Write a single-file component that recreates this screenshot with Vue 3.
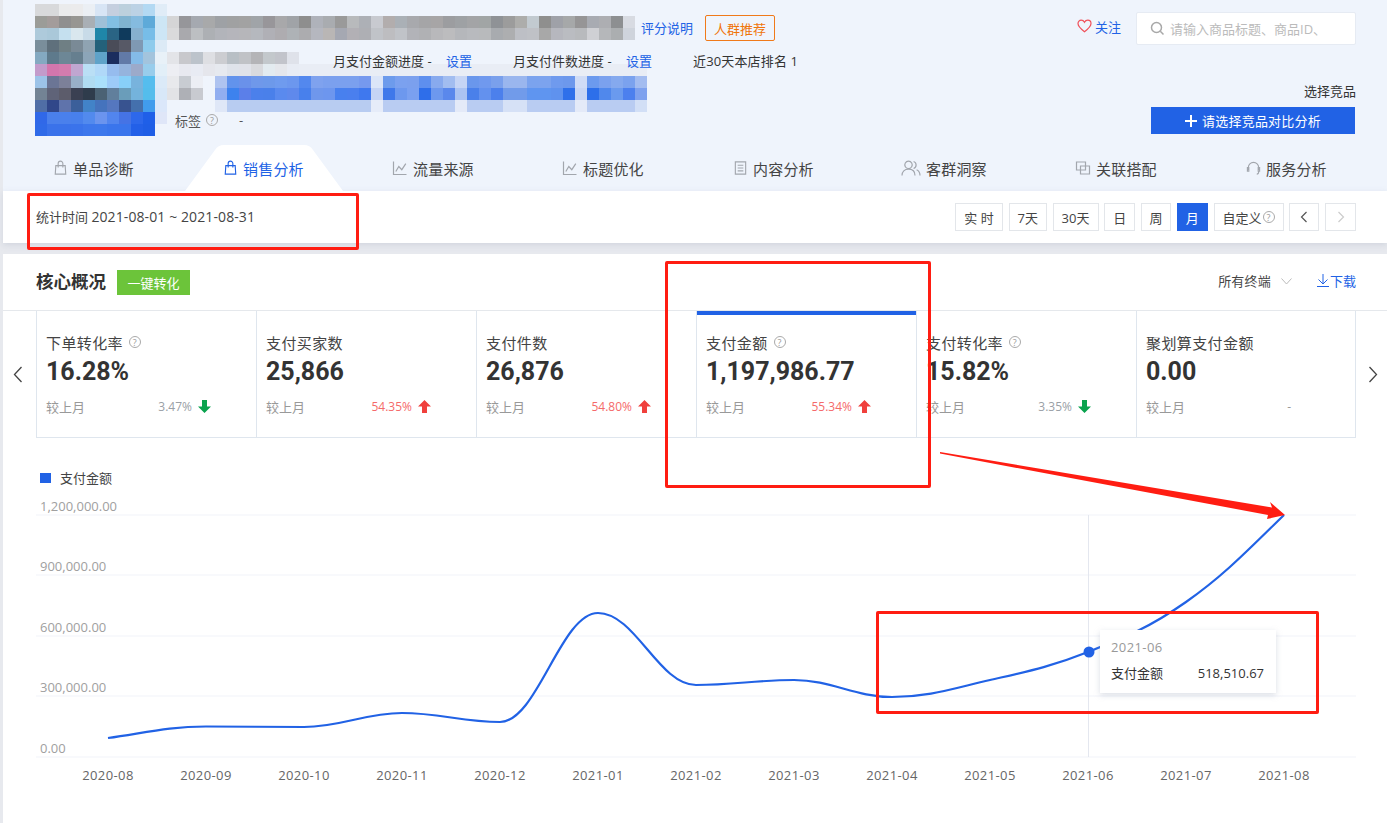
<script setup>
const toCells = (s) => s.trim().split(/\s+/).map((c) => (c === '-' ? 'transparent' : c))

const imageRows = `
#d8d9db #d8d9db #eaebec #ebebec #ebeff4 #d8e5f5 #c5cfdf #bcd0dd #bcd2e5 #b3d9f3 #e0ecf7
#9b9c98 #a39c9b #8f8f8f #979692 #a9afb5 #9fc0d8 #82bfe3 #80b3d0 #85bbdf #5eaad9 #cde6f5
#aecadb #aac8d9 #c5e0ef #d9e7ee #c8dbe8 #1f86a9 #2a6484 #0f3a5c #86b0cf #77bde8 #cde6f6
#7a8e9b #5f707c #6f7f84 #7a8a96 #8fa3b2 #24617a #4a4c58 #575966 #7f99b3 #8ecbec #dceaf6
#84a9c1 #5e7a8c #6d8796 #667f8f #8ca5b8 #5fa3c9 #1b2d5e #627aa7 #84bbe8 #a3c4dd #e8f1f8
#c39bcb #d376ad #d47cae #c0a6d0 #badff5 #b0d8f8 #96bcee #95b4dd #9caaca #98cdec #e2eff8
#9cc3e8 #6b7595 #7c8099 #98afc8 #b0dcf2 #abe0fb #9dcbf8 #88d0f8 #78b3dd #55bdee #dbeaf8
#738394 #5f6378 #5c5c6b #3a4052 #2f3c4c #4b6274 #617f9c #6a9dba #74b3dc #54bdec #d8e8f8
#506ea6 #31478a #5f73ab #3b5f9a #4283c8 #4573bd #5577bf #385390 #4470ad #419ced #dbe7fa
#3068e8 #4a80ec #4a80ec #4880ec #528aee #6b94ee #5285ee #4573e5 #2d68eb #1f5fe8 #dfe6f8
#2f6ae8 #3a72ea #3a72ea #3a73eb #3d77ec #3d78ec #3a75ec #3a75ec #2360e8 #1f5ee6 -
`.trim().split('\n').flatMap(toCells)

const titleRows = [
  `#d5d5d6 #96969a #a5a9b0 #a8a9aa #9ea1a5 #a0a1a2 #a2a2a2 #a0a4a8 #98969a #a8a8aa #a0a3a7 #8e8e8e #afb2ba #a9acb0 #9a9a9a #b8babc #adb0b6 #c8cad0 #b2adad #aab0b6
   #a8a9ad #a5a5a7 #a7a5a6 #9c9da0 #9ea1a4 #a3a4a6 #a1a5a5 #8f9296 #9c9c9c #adadab #c2cad0 #8f8f8e #9fa1a8 #a6a8a9 #969596 #a8abb2 #adaeb2 #8d8f91 #d8dbe2`,
  `#dadadb #a9a9ad #bcbfc2 #adb0b4 #b2b4ba #b5b5bb #b6b6ba #b5b8be #b0b0b6 #aeacb0 #aeb2b6 #acacaf #b5b7bf #b9b6b5 #a5a8b2 #b2b0b5 #aeafb4 #c0c3c8 #bdbdc0 #c0c3c8
   #b2b3b8 #b0b1b4 #b8b8bb #bcbcbe #b5b7bb #b8babe #b8babc #a8abaf #adaeb0 #bdbfc5 #bfc1c6 #a8a8a8 #b6b7be #babcc1 #b8babd #cfd0d4 #b5b7ba #abaeb0 #cfd4dc`
].flatMap(toCells)

const faint = Array(29).fill('#e9edf5').join(' ')
const shopRows = [
  `#e3e4e8 #c8c8cc #bcc3cb #dedfe3 #cccdd1 #b8bfc5 #c0c2c6 #b4b4b7 #c3c8cc #c2c4cb #dfe2ea ${Array(29).fill('-').join(' ')}`,
  `#edeef3 #e8e9f0 #e8ebf3 #e5e6ec #e6e9ef #dfe3ea #e0e2e9 #d9dade #e3ebf0 #e5e7ec #e8ecf4 ${faint}`
].flatMap(toCells)

const blueRows = [
  `#e8e9ec #c8ccd2 #eceef4 - #aec3f0 #6293ec #6a91ea #6f98ea #6d99ea #6f9bee #6c97ee #5388ee #7fa2ee #7ba0ee #7ba0ee #7ba0ee #7699ee #dbe5f8 #6d9bec #7ba1ef
   #7ba0ee #5e8fee #88aaee #a2bdf0 #c6d5f5 #6a97ec #7099ee #7aa0ec #9ab6ee #9ab6ee #7ba3ee #7ca3ee #6f9aee #6d98ec #d0dcf6 #6c9aee #7ba1ee #85a9ee #7ba2ee #a3bcf0`,
  `#e2e3e6 #aeb0b6 #c8cad0 - #91aef0 #3d82ee #5b7fe9 #4b80eb #4a80ea #5a8aee #5f89ec #4880ec #6f97ec #6d96ee #4880ee #4a7fee #3f78ee #c5d4f5 #3f78ea #6d98ee
   #7aa0f0 #2e6eea #6d98ee #5a88ec #abc3f2 #4a80ea #6391ee #4c80ec #719bea #719bea #5f95f0 #5f95f0 #5f92ee #2f70ea #c8d6f4 #2d6fea #5088ec #6a9aee #4c80ee #7ea1ee`,
  `- - - - #dfe7f7 ${Array(12).fill('#b8ccf1').join(' ')} #e6ecf9 ${Array(6).fill('#b9ccf2').join(' ')}
   #e4eaf8 #b9ccf2 #b9ccf2 #b9ccf2 #d6e1f6 #d6e1f6 #b9ccf2 #b9ccf2 #b9ccf2 #b9ccf2 #e4eaf8 #b9ccf2 #b9ccf2 #b9ccf2 #b9ccf2 #d2dff6`
].flatMap(toCells)

const bag = 'M3 5.5h10l.6 9H2.4zM5.5 7.5V3.2a2.5 2.5 0 0 1 5 0v4.3'
const trend = 'M1.5 1.5v13h13M3.8 11.5l3-5 3 3.2 4-6'
const tabs = [
  { name: '单品诊断', w: 15, paths: [bag] },
  { name: '销售分析', w: 15, paths: [bag], active: true },
  { name: '流量来源', w: 16, paths: [trend] },
  { name: '标题优化', w: 16, paths: [trend] },
  { name: '内容分析', w: 15, paths: ['M2.5 1.5h11v13h-11zM5 5h6M5 8h6M5 11h6'] },
  { name: '客群洞察', w: 20, vb: '0 0 20 16', paths: ['M7.5 1.2a3.7 3.7 0 1 0 .01 0zM1 15.5c0-4 2.6-6.3 6.5-6.3s6.5 2.3 6.5 6.3M12.6 1.5a3.7 3.7 0 0 1 0 7M15.6 9.8c2 .9 3.4 2.8 3.4 5.7'] },
  { name: '关联搭配', w: 16, paths: ['M1.5 2h9v8h-9zM5.5 6h9v8h-9z'] },
  { name: '服务分析', w: 15, paths: ['M2.5 10V7.5a5.5 5.5 0 0 1 11 0V10M1.5 7.5h1.5v4H1.5zM11.5 14.5c1.5 0 2-1 2-2.5M13 7.5h1.5v4H13z'] }
]

const ranges = ['实 时', '7天', '30天', '日', '周', '月']

const cards = [
  { label: '下单转化率', help: true, value: '16.28%', pct: '3.47%', dir: 'down' },
  { label: '支付买家数', value: '25,866', pct: '54.35%', dir: 'up' },
  { label: '支付件数', value: '26,876', pct: '54.80%', dir: 'up' },
  { label: '支付金额', help: true, value: '1,197,986.77', pct: '55.34%', dir: 'up', active: true },
  { label: '支付转化率', help: true, value: '15.82%', pct: '3.35%', dir: 'down' },
  { label: '聚划算支付金额', value: '0.00', pct: '-', dir: 'none' }
]

const gridLines = [
  { y: 515, label: '1,200,000.00' },
  { y: 575, label: '900,000.00' },
  { y: 636, label: '600,000.00' },
  { y: 696, label: '300,000.00' },
  { y: 757, label: '0.00' }
]

const pts = [
  [108, 738], [206, 726.5], [304, 727], [402, 713], [500, 722], [598, 613], [696, 685],
  [794, 680], [892, 697], [990, 680], [1088, 652], [1186, 602], [1284, 515]
]
const months = ['2020-08', '2020-09', '2020-10', '2020-11', '2020-12', '2021-01', '2021-02', '2021-03', '2021-04', '2021-05', '2021-06', '2021-07', '2021-08']

// Smooth curve with flat tangents at local extrema, as the original chart draws it
const slope = (i) => {
  if (i === 0) return ((pts[1][1] - pts[0][1]) / 98) * 1.2
  if (i === pts.length - 1) return ((pts[i][1] - pts[i - 1][1]) / 98) * 1.1
  const a = pts[i][1] - pts[i - 1][1]
  const b = pts[i + 1][1] - pts[i][1]
  if (a * b <= 0) return 0
  return (a + b) / 196
}
const linePath = pts.reduce((d, p, i) => {
  if (i === 0) return `M${p[0]} ${p[1]}`
  const q = pts[i - 1]
  const dx = (p[0] - q[0]) * 0.38
  return `${d}C${q[0] + dx} ${q[1] + slope(i - 1) * dx} ${p[0] - dx} ${p[1] - slope(i) * dx} ${p[0]} ${p[1]}`
}, '')
</script>

<template>
  <div class="page">
    <header class="hero">
      <div class="hero-top">
        <div class="mosaic image-mosaic">
          <i v-for="(c, i) in imageRows" :key="i" :style="{ background: c }"></i>
        </div>
        <div class="info">
          <div class="info-title">
            <div class="mosaic title-mosaic">
              <i v-for="(c, i) in titleRows" :key="i" :style="{ background: c }"></i>
            </div>
            <a class="link score">评分说明</a>
            <span class="crowd-tag">人群推荐</span>
          </div>
          <div class="info-shop">
            <div class="mosaic shop-mosaic">
              <i v-for="(c, i) in shopRows" :key="i" :style="{ background: c }"></i>
            </div>
            <div class="progress">
              <span class="prog-a">月支付金额进度 -</span>
              <a class="link prog-b">设置</a>
              <span class="prog-c">月支付件数进度 -</span>
              <a class="link prog-d">设置</a>
              <span class="prog-e">近30天本店排名 1</span>
            </div>
          </div>
          <div class="mosaic blue-mosaic">
            <i v-for="(c, i) in blueRows" :key="i" :style="{ background: c }"></i>
          </div>
          <div class="tags">
            <span>标签</span><span class="q">?</span><span class="tag-dash">-</span>
          </div>
        </div>
        <div class="actions">
          <div class="action-top">
            <div class="follow-wrap">
              <svg class="heart" width="15" height="14" viewBox="0 0 15 14">
                <path d="M7.5 12.8C3 9.4 1 7.2 1 4.6 1 2.6 2.5 1.2 4.2 1.2c1.4 0 2.6.8 3.3 2.1.7-1.3 1.9-2.1 3.3-2.1C12.5 1.2 14 2.6 14 4.6c0 2.6-2 4.8-6.5 8.2z" fill="none" stroke="#f0505a" stroke-width="1.2" />
              </svg>
              <a class="link follow">关注</a>
            </div>
            <div class="search">
              <svg width="15" height="15" viewBox="0 0 15 15">
                <circle cx="6.5" cy="6.5" r="5" fill="none" stroke="#a8a8a8" stroke-width="1.5" />
                <path d="M10.3 10.3 13.5 13.5" stroke="#a8a8a8" stroke-width="1.5" />
              </svg>
              <span>请输入商品标题、商品ID、</span>
            </div>
          </div>
          <div class="compete-label">选择竞品</div>
          <button class="compete-btn">
            <svg width="12" height="12" viewBox="0 0 12 12"><path d="M6 0v12M0 6h12" stroke="#fff" stroke-width="2" /></svg>
            <span>请选择竞品对比分析</span>
          </button>
        </div>
      </div>
      <nav class="tabs">
        <div v-for="t in tabs" :key="t.name" class="tab" :class="{ active: t.active }">
          <svg v-if="t.active" class="tab-shape" width="158" height="46" viewBox="0 0 158 46">
            <path d="M0 46 30 5Q33 0 39 0H119Q125 0 128 5L158 46Z" fill="#fff" />
          </svg>
          <svg class="tab-icon" :width="t.w" height="16" :viewBox="t.vb || '0 0 16 16'">
            <path v-for="p in t.paths" :key="p" :d="p" fill="none" stroke="currentColor" stroke-width="1.2" />
          </svg>
          <span class="tab-name">{{ t.name }}</span>
        </div>
      </nav>
    </header>

    <section class="toolbar">
      <div class="period">统计时间 <span class="period-date">2021-08-01 ~ 2021-08-31</span></div>
      <div class="ranges">
        <button v-for="r in ranges" :key="r" class="range" :class="{ on: r === '月', wide: r === '实 时' }">{{ r }}</button>
        <button class="range custom">自定义<span class="q">?</span></button>
        <button class="range pager">
          <svg width="8" height="12" viewBox="0 0 8 12"><path d="M6.5 1 1.5 6l5 5" fill="none" stroke="#555" stroke-width="1.2" /></svg>
        </button>
        <button class="range pager">
          <svg width="8" height="12" viewBox="0 0 8 12"><path d="M1.5 1l5 5-5 5" fill="none" stroke="#ccc" stroke-width="1.2" /></svg>
        </button>
      </div>
    </section>

    <main class="core">
      <div class="core-head">
        <h2>核心概况</h2>
        <span class="convert">一键转化</span>
        <span class="terminal">所有终端</span>
        <svg class="caret" width="11" height="7" viewBox="0 0 11 7"><path d="M.5.5 5.5 6l5-5.5" fill="none" stroke="#bbb" /></svg>
        <svg class="dl-icon" width="12" height="13" viewBox="0 0 12 13"><path d="M6 0v10M1.5 5.500 6 10l4.500-4.500M0 12.500h12" fill="none" stroke="#2162e5" /></svg>
        <a class="link download">下载</a>
      </div>

      <div class="metrics">
        <div class="nav-side left-side">
          <svg width="10" height="17" viewBox="0 0 10 17"><path d="M8.5 1 1.5 8.5l7 7.5" fill="none" stroke="#444" stroke-width="1.3" /></svg>
        </div>
        <div class="cards">
          <div v-for="c in cards" :key="c.label" class="card" :class="{ active: c.active }">
            <div class="card-label">{{ c.label }}<span v-if="c.help" class="q">?</span></div>
            <div class="card-value">{{ c.value }}</div>
            <div class="card-foot">
              <span class="foot-name">较上月</span>
              <span class="pct" :class="c.dir">{{ c.pct }}</span>
              <svg v-if="c.dir === 'up'" class="arrow" width="13" height="13" viewBox="0 0 13 13"><path d="M6.5 0 13 6.500H9V13H4V6.500H0Z" fill="#f0403c" /></svg>
              <svg v-else-if="c.dir === 'down'" class="arrow" width="13" height="13" viewBox="0 0 13 13"><path d="M6.5 13 13 6.500H9V0H4V6.500H0Z" fill="#0aa34e" /></svg>
            </div>
          </div>
        </div>
        <div class="nav-side right-side">
          <svg width="10" height="17" viewBox="0 0 10 17"><path d="M1.5 1l7 7.5-7 7.5" fill="none" stroke="#444" stroke-width="1.3" /></svg>
        </div>
      </div>

      <div class="chart">
        <div class="legend"><i></i><span>支付金额</span></div>
        <svg class="plot" width="1384" height="333" viewBox="3 490 1384 333">
          <line v-for="g in gridLines" :key="g.y" x1="36" x2="1356" :y1="g.y" :y2="g.y" stroke="#f1f3f9" stroke-width="1.2" />
          <text v-for="g in gridLines" :key="g.label" x="40" :y="g.y - 4" class="y-label">{{ g.label }}</text>
          <line x1="1088.5" x2="1088.5" y1="515" y2="757" stroke="#e4e7ef" />
          <path :d="linePath" fill="none" stroke="#2162e5" stroke-width="2.2" />
          <circle cx="1089" cy="652" r="5.5" fill="#2162e5" />
          <text v-for="(m, i) in months" :key="m" :x="pts[i][0]" y="780" text-anchor="middle" class="x-label">{{ m }}</text>
        </svg>
        <div class="tooltip">
          <div class="tip-date">2021-06</div>
          <div class="tip-row"><span>支付金额</span><span>518,510.67</span></div>
        </div>
      </div>
    </main>

    <div class="mark mark-a"></div>
    <div class="mark mark-b"></div>
    <div class="mark mark-c"></div>
    <svg class="mark-arrow" width="360" height="80" viewBox="935 445 360 80">
      <path d="M940 452 1272 507.5 1270 502 1285 515 1267 519 1268 515 940 453.5Z" fill="#ff1d12" />
    </svg>
  </div>
</template>

<style>
html,
body {
  margin: 0;
  background: #fff;
}
</style>

<style scoped>
* {
  box-sizing: border-box;
}
.page {
  position: relative;
  width: 1387px;
  height: 823px;
  overflow: hidden;
  padding-left: 3px;
  background: #e7e9ee;
  color: #333;
  font-family: "Open Sans", "Noto Sans CJK SC", sans-serif;
  font-size: 13px;
}
.link {
  color: #2162e5;
}
.q {
  display: inline-flex;
  align-items: center;
  justify-content: center;
  width: 12px;
  height: 12px;
  border: 1px solid #aaa;
  border-radius: 50%;
  color: #999;
  font-size: 9px;
  line-height: 1;
}
.mosaic {
  display: grid;
  grid-template-rows: repeat(auto-fill, 12px);
}
.mosaic i {
  display: block;
}
.hero {
  height: 191px;
  background: #eff4fc;
}
.hero-top {
  display: flex;
  height: 145px;
  padding: 4px 31px 0 32px;
}
.image-mosaic {
  flex: none;
  width: 132px;
  height: 132px;
  grid-template-columns: repeat(11, 12px);
}
.info {
  flex: 1;
  min-width: 0;
  padding-top: 11px;
}
.info-title {
  display: flex;
  align-items: center;
  height: 26px;
}
.title-mosaic {
  width: 468px;
  height: 24px;
  grid-template-columns: repeat(39, 12px);
}
.score {
  margin: 0 0 2px 6px;
}
.crowd-tag {
  display: flex;
  align-items: center;
  justify-content: center;
  width: 70px;
  height: 26px;
  margin-left: 12px;
  border: 1px solid #f07a1a;
  border-radius: 2px;
  color: #f0740a;
}
.info-shop {
  display: grid;
  margin-top: 11px;
}
.shop-mosaic,
.progress {
  grid-area: 1 / 1;
}
.shop-mosaic {
  width: 480px;
  height: 24px;
  grid-template-columns: repeat(40, 12px);
}
.progress {
  display: flex;
  height: 18px;
  padding-left: 166px;
  line-height: 18px;
  white-space: nowrap;
}
.prog-a,
.prog-c {
  width: 113px;
}
.prog-b,
.prog-d {
  width: 67px;
}
.prog-e {
  letter-spacing: 0.15px;
}
.blue-mosaic {
  width: 480px;
  height: 36px;
  grid-template-columns: repeat(40, 12px);
}
.tags {
  display: flex;
  align-items: center;
  height: 18px;
  margin-top: -1px;
  padding-left: 8px;
  color: #555;
}
.tags .q {
  margin-left: 5px;
}
.tag-dash {
  margin-left: 21px;
}
.actions {
  flex: none;
  width: 280px;
  padding-top: 8px;
  display: flex;
  flex-direction: column;
  align-items: flex-end;
}
.action-top {
  display: flex;
  align-items: center;
}
.follow-wrap {
  display: flex;
  align-items: center;
  gap: 3px;
  margin-bottom: 5px;
  margin-right: 15px;
}
.search {
  display: flex;
  align-items: center;
  gap: 5px;
  width: 220px;
  height: 33px;
  padding-left: 13px;
  border: 1px solid #e6ebf3;
  border-radius: 2px;
  background: #fff;
  color: #bbb;
}
.compete-label {
  margin-top: 37px;
  line-height: 18px;
}
.compete-btn {
  display: flex;
  align-items: center;
  justify-content: center;
  gap: 5px;
  width: 204px;
  height: 27px;
  margin: 7px 1px 0 0;
  padding: 0;
  border: 0;
  background: #2162e5;
  color: #fff;
  font: inherit;
  letter-spacing: 0.2px;
}
.tabs {
  display: grid;
  grid-template-columns: repeat(4, 170px) 173px repeat(2, 170px) auto;
  height: 46px;
  padding-left: 45px;
}
.tab {
  position: relative;
  display: grid;
  grid-template-columns: 20px auto;
  justify-content: start;
  align-items: center;
  column-gap: 5px;
  color: #a2a6ad;
}
.tab-shape {
  position: absolute;
  left: -33px;
  bottom: 0;
}
.tab-icon {
  position: relative;
  justify-self: end;
}
.tab-name {
  position: relative;
  color: #444;
  font-size: 15px;
  letter-spacing: 0.2px;
}
.tab.active,
.tab.active .tab-name {
  color: #2162e5;
}
.toolbar {
  display: flex;
  align-items: center;
  justify-content: space-between;
  height: 52px;
  padding: 0 31px 0 33px;
  background: #fff;
  box-shadow: 0 2px 6px rgba(160, 170, 185, 0.3);
}
.period {
  margin-bottom: 1px;
  color: #444;
}
.period-date {
  font-size: 14px;
  letter-spacing: 0.1px;
}
.ranges {
  display: flex;
  gap: 5.75px;
}
.range {
  display: flex;
  align-items: center;
  justify-content: center;
  height: 28px;
  width: 31px;
  padding: 0;
  border: 1px solid #e3e6ea;
  background: #fff;
  color: #444;
  font: inherit;
}
.range.wide {
  width: 48px;
}
.range:nth-child(2) {
  width: 38px;
}
.range:nth-child(3) {
  width: 46px;
}
.range:nth-child(5) {
  width: 30px;
}
.range.on {
  border-color: #2162e5;
  background: #2162e5;
  color: #fff;
}
.range.custom {
  width: 70px;
}
.range.custom .q {
  margin-left: 1px;
}
.range.pager {
  width: 31px;
}
.range.custom + .pager {
  width: 30px;
}
.core {
  position: relative;
  height: 569px;
  margin-top: 11px;
  background: #fff;
}
.core-head {
  display: flex;
  align-items: center;
  height: 57px;
  padding: 0 31px 0 33px;
  border-bottom: 1px solid #e5e8ec;
}
.core-head h2 {
  margin: 0 0 3px;
  font-size: 17.5px;
  font-weight: 700;
}
.convert {
  display: flex;
  align-items: center;
  justify-content: center;
  width: 73px;
  height: 25px;
  margin-left: 11px;
  background: #6cc43a;
  color: #fff;
}
.terminal {
  margin: 0 0 3px auto;
  letter-spacing: 0.2px;
  color: #444;
}
.caret {
  margin: 0 0 2px 10px;
}
.dl-icon {
  margin: 0 0 3px 25px;
}
.download {
  margin: 0 0 3px 1px;
}
.metrics {
  display: flex;
  height: 127px;
}
.nav-side {
  display: flex;
  align-items: center;
  width: 33px;
}
.left-side {
  padding-left: 10px;
}
.right-side {
  width: 31px;
  padding-left: 12px;
}
.cards {
  display: grid;
  grid-template-columns: repeat(6, 220px);
  border-bottom: 1px solid #dfe6ee;
}
.card {
  position: relative;
  height: 126px;
  padding: 21px 0 0 9px;
  border-left: 1px solid #dfe6ee;
}
.card:last-child {
  border-right: 1px solid #dfe6ee;
}
.card.active::before {
  content: "";
  position: absolute;
  top: 0;
  left: 0;
  right: 0;
  height: 4px;
  background: #2162e5;
}
.card-label {
  display: flex;
  align-items: center;
  height: 20px;
  font-size: 15px;
  letter-spacing: 0.4px;
  color: #444;
}
.card-label .q {
  margin-left: 6px;
}
.card-value {
  height: 36px;
  margin-top: 2px;
  font-family: Roboto, sans-serif;
  font-size: 25px;
  font-weight: 700;
  line-height: 36px;
  color: #333;
}
.card-foot {
  display: flex;
  align-items: center;
  width: 152px;
  height: 20px;
  margin-top: 6px;
  color: #999;
}
.pct {
  flex: 1;
  text-align: right;
  font-size: 12px;
}
.pct.up {
  color: #f56a6a;
}
.pct.down {
  color: #9aa0a6;
}
.pct.none {
  padding-right: 7px;
}
.arrow {
  flex: none;
  margin: 0 -13px 0 6px;
}
.chart {
  position: relative;
}
.legend {
  display: flex;
  align-items: center;
  height: 18px;
  margin-top: 32px;
  padding-left: 37px;
  color: #444;
}
.legend i {
  width: 11px;
  height: 10px;
  margin: 0 9px 2px 0;
  background: #2162e5;
}
.legend span {
  margin-bottom: 3px;
}
.plot {
  display: block;
  margin-top: 2px;
}
.y-label {
  fill: #a0a0a0;
  font-size: 13px;
}
.x-label {
  fill: #666;
  font-size: 13px;
  letter-spacing: 0.4px;
}
.tooltip {
  position: absolute;
  left: 1097px;
  top: 160px;
  width: 176px;
  height: 63px;
  padding: 8px 12px 0 11px;
  background: #fff;
  box-shadow: 0 2px 6px rgba(150, 160, 180, 0.35);
  font-size: 13px;
}
.tip-date {
  color: #999;
  line-height: 18px;
  letter-spacing: 0.4px;
}
.tip-row {
  display: flex;
  justify-content: space-between;
  margin-top: 8px;
  line-height: 18px;
}
.mark {
  position: absolute;
  border: 3px solid #ff1d12;
  border-radius: 2px;
}
.mark-a {
  left: 27px;
  top: 193px;
  width: 332px;
  height: 57px;
}
.mark-b {
  left: 665px;
  top: 261px;
  width: 266px;
  height: 227px;
}
.mark-c {
  left: 876px;
  top: 611px;
  width: 443px;
  height: 103px;
}
.mark-arrow {
  position: absolute;
  left: 935px;
  top: 445px;
}
</style>
